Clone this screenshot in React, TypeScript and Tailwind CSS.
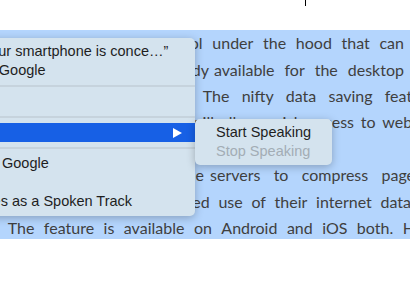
import type { ReactNode } from "react"

const body = "font-['Lato','Open_Sans',sans-serif] text-[16px] text-[#3f3f3f]"
const menuFont = "font-['Liberation_Sans','Helvetica',Arial,sans-serif] text-[14.5px]"

function Words({ words, className }: { words: string[]; className: string }) {
  return (
    <div className={`flex shrink-0 justify-between whitespace-nowrap ${className}`}>
      {words.map((w, i) => (
        <span key={i}>{w}</span>
      ))}
    </div>
  )
}

// a word that ends at a fixed x (the part before it is under the menu)
function Tail({ word, className }: { word: string; className: string }) {
  return <div className={`flex shrink-0 justify-end whitespace-nowrap ${className}`}>{word}</div>
}

function Row({ children }: { children: ReactNode }) {
  return <div className="flex h-[26.4px] items-center">{children}</div>
}

function Item({ children, className = "" }: { children?: ReactNode; className?: string }) {
  return <div className={`flex h-[19px] items-center whitespace-nowrap ${className}`}>{children}</div>
}

function Separator() {
  return (
    <div className="flex h-[12px] items-center">
      <div className="h-[2px] w-full bg-[#c6d3dd]" />
    </div>
  )
}

export default function App() {
  return (
    <div className="relative h-[289px] w-[410px] overflow-hidden bg-white">
      {/* caret */}
      <div className="absolute left-[305px] top-0 h-[6px] w-px bg-black" />

      {/* selected article text */}
      <div className={`mt-[30px] h-[209px] bg-[#b4d5fd] ${body}`}>
        <Row>
          <Words words={["with", "a", "built-in", "compression"]} className="ml-[2px] w-[160px]" />
          <Words words={["tool", "under", "the", "hood", "that", "can"]} className="ml-[13px] w-[229px]" />
        </Row>
        <Row>
          <Tail word="already" className="w-[209px]" />
          <Words words={["available", "for", "the", "desktop"]} className="ml-[5px] w-[190px]" />
        </Row>
        <Row>
          <Words words={["Chrome.", "The", "nifty", "data", "saving", "feature"]} className="ml-[131px] w-[304px]" />
        </Row>
        <Row>
          <Words words={["will", "allow", "quick", "access", "to", "websites"]} className="ml-[190px] w-[254px]" />
        </Row>
        <Row>
          <Words words={["and", "pages", "by", "using"]} className="ml-[150px] w-[170px]" />
        </Row>
        <Row>
          <Tail word="Google" className="w-[204px]" />
          <Words words={["servers", "to", "compress", "pages"]} className="ml-[6px] w-[212px]" />
        </Row>
        <Row>
          <Words words={["reduced", "use", "of", "their", "internet", "data"]} className="ml-[153px] w-[258px]" />
        </Row>
        <Row>
          <Words
            words={["usage.", "The", "feature", "is", "available", "on", "Android", "and", "iOS", "both.", "Hence"]}
            className="ml-[-46px] w-[494px]"
          />
        </Row>
      </div>

      {/* context menu */}
      <div
        className={`absolute left-[-100px] top-[38px] w-[295px] rounded-[5px] bg-[#d4e3ee] pb-[5px] pt-[4px] text-[#1e1e1e] shadow-[0_2px_9px_rgba(0,0,0,0.25)] ${menuFont}`}
      >
        <Item className="pl-[19px]">Look Up “Your smartphone is conce…”</Item>
        <Item className="pl-[19px]">Search with Google</Item>
        <Separator />
        <Item className="pl-[19px]">Copy</Item>
        <Separator />
        <Item className="justify-between bg-[#1760e5] pl-[19px] pr-[13px] text-white">
          <span>Speech</span>
          <svg width="9" height="10" viewBox="0 0 9 10">
            <path d="M0 0 L9 5 L0 10 Z" fill="white" />
          </svg>
        </Item>
        <Separator />
        <Item className="pl-[19px]">Search With Google</Item>
        <Item className="pl-[19px]">Share</Item>
        <Item className="pl-[19px]">Add to iTunes as a Spoken Track</Item>
      </div>

      {/* speech submenu */}
      <div
        className={`absolute left-[195px] top-[119px] w-[137px] rounded-[5px] bg-[#d4e3ee] py-[4px] text-[#1e1e1e] shadow-[0_2px_9px_rgba(0,0,0,0.25)] ${menuFont}`}
      >
        <Item className="pl-[21px]">Start Speaking</Item>
        <Item className="pl-[21px] text-[#a3adb5]">Stop Speaking</Item>
      </div>
    </div>
  )
}
